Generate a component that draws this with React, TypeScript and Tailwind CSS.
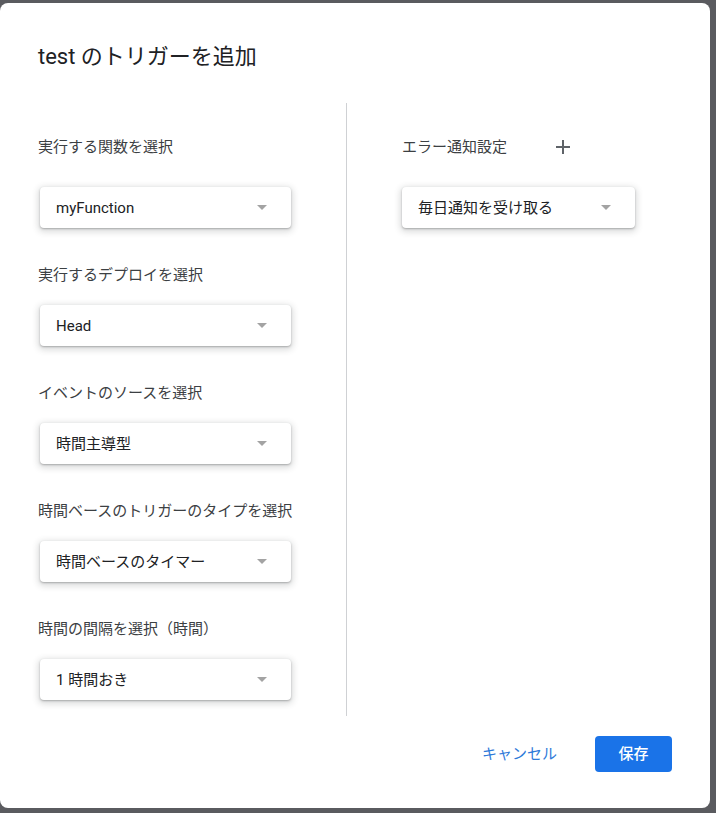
import React from 'react';

const font = "font-['Roboto','Noto_Sans_CJK_JP',sans-serif]";

interface SelectBoxProps {
  value: string;
  width: string;
}

function SelectBox({ value, width }: SelectBoxProps) {
  return (
    <div
      className={`${width} h-[41px] flex items-center justify-between pl-4 pr-6 rounded bg-white shadow-[0_1px_2px_rgba(60,64,67,0.35),0_2px_6px_2px_rgba(60,64,67,0.18)]`}
    >
      <span className="text-[15px] leading-5 text-[#202124]">{value}</span>
      {/* dropdown caret */}
      <svg width="10" height="5" viewBox="0 0 10 5" className="shrink-0">
        <path d="M0 0h10L5 5z" fill="#a3a3a3" />
      </svg>
    </div>
  );
}

const fields = [
  { label: '実行するデプロイを選択', value: 'Head' },
  { label: 'イベントのソースを選択', value: '時間主導型' },
  { label: '時間ベースのトリガーのタイプを選択', value: '時間ベースのタイマー' },
  { label: '時間の間隔を選択（時間）', value: '1 時間おき' },
];

export default function App() {
  return (
    <div className={`w-[716px] h-[813px] bg-[#5a5b5f] pt-[3px] overflow-hidden ${font}`}>
      <div className="w-[710px] h-[805px] bg-white rounded-lg flex flex-col">
        <h2 className="pt-10 pl-[38px] text-[22px] leading-7 text-[#202124] font-normal">
          test のトリガーを追加
        </h2>

        <div className="mt-8 flex h-[613px]">
          {/* left column */}
          <div className="w-[347px] pl-[38px] pt-[34px] border-r border-[#cfd1d4] flex flex-col">
            <p className="text-[15px] leading-5 text-[#3c4043]">実行する関数を選択</p>
            <div className="mt-[30px] ml-[2px]">
              <SelectBox value="myFunction" width="w-[251px]" />
            </div>
            {fields.map((f) => (
              <div key={f.label} className="mt-[37px]">
                <p className="text-[15px] leading-5 text-[#3c4043]">{f.label}</p>
                <div className="mt-5 ml-[2px]">
                  <SelectBox value={f.value} width="w-[251px]" />
                </div>
              </div>
            ))}
          </div>

          {/* right column */}
          <div className="pl-[55px] pt-[34px] flex flex-col">
            <div className="flex items-center h-5">
              <p className="text-[15px] leading-5 text-[#3c4043]">エラー通知設定</p>
              <svg width="14" height="14" viewBox="0 0 14 14" className="ml-[49px]">
                <path d="M7 0v14M0 7h14" stroke="#5f6368" strokeWidth="2" />
              </svg>
            </div>
            <div className="mt-[30px]">
              <SelectBox value="毎日通知を受け取る" width="w-[233px]" />
            </div>
          </div>
        </div>

        <div className="mt-5 flex items-center justify-end pr-[38px]">
          <button className="text-[15px] leading-5 text-[#2f7ad9] mr-[38px]">キャンセル</button>
          <button className="w-[77px] h-9 rounded bg-[#1a73e8] text-white text-[15px] font-medium">
            保存
          </button>
        </div>
      </div>
    </div>
  );
}
